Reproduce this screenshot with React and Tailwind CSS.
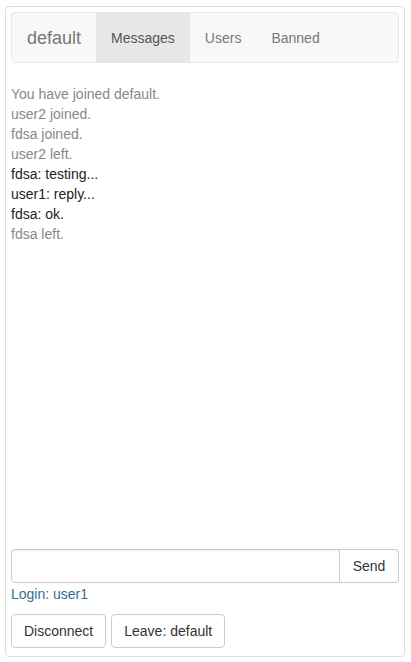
const lines = [
  { text: "You have joined default.", muted: true },
  { text: "user2 joined.", muted: true },
  { text: "fdsa joined.", muted: true },
  { text: "user2 left.", muted: true },
  { text: "fdsa: testing..." },
  { text: "user1: reply..." },
  { text: "fdsa: ok." },
  { text: "fdsa left.", muted: true },
];

const App = () => {
  return (
    <div className="bg-white pt-[6px] pl-[5px] pr-[6px] font-['Liberation_Sans',Arial,sans-serif] text-[14px] leading-[20px] text-[#333]">
      <div className="h-[651px] border border-[#ddd] rounded-[4px] p-[5px] flex flex-col">
        <nav className="h-[51px] shrink-0 flex border border-[#e7e7e7] bg-[#f8f8f8] rounded-[4px]">
          <span className="px-[15px] flex items-center text-[18px] text-[#777]">default</span>
          <span className="px-[15px] flex items-center bg-[#e7e7e7] text-[#555]">Messages</span>
          <span className="px-[15px] flex items-center text-[#777]">Users</span>
          <span className="px-[15px] flex items-center text-[#777]">Banned</span>
        </nav>

        <div className="flex-1 mt-[21px]">
          {lines.map((l, i) => (
            <div key={i} className={l.muted ? "text-[#888]" : "text-[#222]"}>
              {l.text}
            </div>
          ))}
        </div>

        <div className="flex h-[34px]">
          <input
            type="text"
            className="flex-1 min-w-0 border border-[#ccc] rounded-l-[4px] px-3 outline-none shadow-[inset_0_1px_1px_rgba(0,0,0,0.075)]"
          />
          <button className="w-[59px] border border-l-0 border-[#ccc] rounded-r-[4px] bg-white text-[#333]">
            Send
          </button>
        </div>
        <div className="text-[#31708f] mt-[1px]">Login: user1</div>
        <div className="flex gap-[5px] mt-[10px] mb-[3px]">
          <button className="h-[34px] px-[12px] border border-[#ccc] rounded-[4px] bg-white text-[#333]">
            Disconnect
          </button>
          <button className="h-[34px] px-[12px] border border-[#ccc] rounded-[4px] bg-white text-[#333]">
            Leave: default
          </button>
        </div>
      </div>
    </div>
  );
};

export default App;
